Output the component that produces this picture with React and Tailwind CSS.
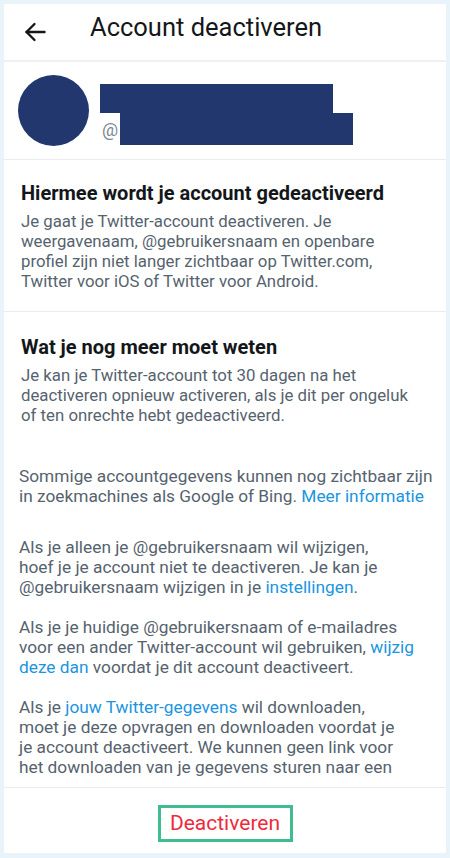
import React from 'react'

const link = 'text-[#1b95e0]'

function BackArrow() {
  return (
    <svg width="22" height="20" viewBox="0 0 22 20" fill="none" stroke="#14171a" strokeWidth="2.4" strokeLinecap="round" strokeLinejoin="round">
      <path d="M20.5 10H2.5" />
      <path d="M10.5 2L2.5 10l8 8" />
    </svg>
  )
}

export default function App() {
  return (
    <div
      className="w-[450px] h-[858px] bg-[#e9f3fa] pt-[4px] px-[4px] pb-[5px] flex"
      style={{ fontFamily: 'Roboto, "Noto Sans", sans-serif' }}
    >
      <div className="flex-1 bg-white flex flex-col overflow-hidden">
        {/* Header */}
        <div className="h-[56px] flex items-center shrink-0">
          <div className="w-[86px] pl-[20px] flex items-center">
            <BackArrow />
          </div>
          <h1 className="text-[25.5px] text-[#14171a] leading-none mb-[8px] whitespace-nowrap">Account deactiveren</h1>
        </div>
        <div className="h-[2px] bg-[#eef0f2] shrink-0" />

        {/* Profile */}
        <div className="flex items-start pl-[14px] py-[13px] shrink-0">
          <div className="w-[71px] h-[71px] rounded-full bg-[#22376e]" />
          <div className="ml-[11px] mt-[9px] flex flex-col">
            <div className="w-[233px] h-[29px] bg-[#22376e]" />
            <div className="flex items-center">
              <span className="text-[18px] text-[#7b8893] leading-none ml-[2px] mt-[2px]">@</span>
              <div className="w-[233px] h-[32px] bg-[#22376e] ml-[2px]" />
            </div>
          </div>
        </div>
        <div className="h-px bg-[#ebeef0] shrink-0" />

        {/* Scrollable content */}
        <div className="flex-1 overflow-hidden mb-[8px] text-[16.8px] leading-[20px] text-[#56636e] whitespace-nowrap">
          <div className="px-[17px] pt-[21px] pb-[20px]">
            <h2 className="text-[20px] leading-[24px] font-bold text-[#14171a]">
              Hiermee wordt je account gedeactiveerd
            </h2>
            <p className="mt-[6px]">
              Je gaat je Twitter-account deactiveren. Je<br />
              weergavenaam, @gebruikersnaam en openbare<br />
              profiel zijn niet langer zichtbaar op Twitter.com,<br />
              Twitter voor iOS of Twitter voor Android.
            </p>
          </div>
          <div className="h-px bg-[#ebeef0]" />
          <div className="px-[17px] pt-[23px]">
            <h2 className="text-[20px] leading-[24px] font-bold text-[#14171a]">
              Wat je nog meer moet weten
            </h2>
            <p className="mt-[6px]">
              Je kan je Twitter-account tot 30 dagen na het<br />
              deactiveren opnieuw activeren, als je dit per ongeluk<br />
              of ten onrechte hebt gedeactiveerd.
            </p>
          </div>
          <div className="px-[15px] text-[17.3px]">
            <p className="mt-[41px]">
              Sommige accountgegevens kunnen nog zichtbaar zijn<br />
              in zoekmachines als Google of Bing. <span className={link}>Meer informatie</span>
            </p>
            <p className="mt-[31px]">
              Als je alleen je @gebruikersnaam wil wijzigen,<br />
              hoef je je account niet te deactiveren. Je kan je<br />
              @gebruikersnaam wijzigen in je <span className={link}>instellingen</span>.
            </p>
            <p className="mt-[20px]">
              Als je je huidige @gebruikersnaam of e-mailadres<br />
              voor een ander Twitter-account wil gebruiken, <span className={link}>wijzig</span><br />
              <span className={link}>deze dan</span> voordat je dit account deactiveert.
            </p>
            <p className="mt-[20px]">
              Als je <span className={link}>jouw Twitter-gegevens</span> wil downloaden,<br />
              moet je deze opvragen en downloaden voordat je<br />
              je account deactiveert. We kunnen geen link voor<br />
              het downloaden van je gegevens sturen naar een
            </p>
          </div>
        </div>

        {/* Footer */}
        <div className="h-px bg-[#ebeef0] shrink-0" />
        <div className="h-[65px] shrink-0 flex justify-center pt-[17px]">
          <div className="h-[37px] w-[135px] border-[3px] border-[#40bd8e] flex items-center justify-center">
            <span className="text-[21px] leading-none text-[#ee2a3c]">Deactiveren</span>
          </div>
        </div>
      </div>
    </div>
  )
}
